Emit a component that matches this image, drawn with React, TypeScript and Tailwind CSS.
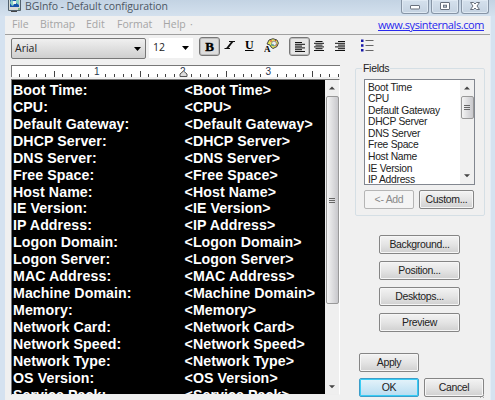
import React from "react";

const fields = [
  "Boot Time", "CPU", "Default Gateway", "DHCP Server", "DNS Server", "Free Space",
  "Host Name", "IE Version", "IP Address", "Logon Domain", "Logon Server", "MAC Address",
  "Machine Domain", "Memory", "Network Card", "Network Speed", "Network Type", "OS Version", "Service Pack",
];

function Button({ label, className = "" }: { label: string; className?: string }) {
  return (
    <button className={`flex items-center justify-center rounded-[2px] border border-[#858585] bg-linear-to-b from-[#f3f3f3] via-[#e4e4e4] to-[#d0d0d0] text-[10.5px] leading-none tracking-[-0.35px] whitespace-nowrap text-[#222] inset-shadow-[0_0_0_1px_#f6f6f6] ${className}`}>
      {label}
    </button>
  );
}

function Arrow({ up = false }: { up?: boolean }) {
  return (
    <svg width="6" height="4" viewBox="0 0 6 4" className="shrink-0" fill="#444">
      <path d={up ? "M3 0.5L6 3.5H0Z" : "M0 0.3H6L3 3.3Z"} />
    </svg>
  );
}

function WindowButton({ kind }: { kind: "min" | "max" | "close" }) {
  return (
    <div className="flex h-[14px] w-[28px] justify-center rounded-b-[3px] border border-t-0 border-[#8795a6] bg-linear-to-b from-[#d5e1ed] to-[#c4d2e1] inset-shadow-[0_0_0_1px_#dfe9f3]">
      <svg width="12" height="12" viewBox="0 0 12 12" fill="#fff" stroke="#69717d" strokeWidth="1">
        {kind === "min" && <rect x="1.5" y="5.5" width="9" height="3.5" rx="0.5" />}
        {kind === "max" && <><rect x="1.5" y="2.5" width="9" height="7" rx="0.5" /><rect x="4.5" y="5.2" width="3" height="2" fill="#c8d4e2" /></>}
        {kind === "close" && <path d="M1.5 2.5H4.5L6 4L7.5 2.5H10.5L8 6L10.5 9.5H7.5L6 8L4.5 9.5H1.5L4 6Z" />}
      </svg>
    </div>
  );
}

function Lines({ align }: { align: "left" | "center" | "right" }) {
  return (
    <svg width="12" height="12" viewBox="0 0 12 12" stroke="#111" strokeWidth="1">
      {[0, 1, 2, 3, 4, 5].map((i) => {
        const w = i % 2 ? 10 : 7;
        const x = align === "left" ? 1 : align === "right" ? 11 - w : 6 - w / 2;
        return <path key={i} d={`M${x} ${1.5 + i * 1.8}h${w}`} />;
      })}
    </svg>
  );
}

function Ruler() {
  const ticks = Array.from({ length: 38 }, (_, i) => i + 1);
  return (
    <svg width="328" height="12" viewBox="0 0 328 12" fontFamily="Liberation Sans, sans-serif" fontSize="10">
      {ticks.map((i) =>
        i % 10 === 0 ? null : (
          <path key={i} d={`M${Math.round(-1.3 + i * 8.6) + 0.5} ${i % 5 === 0 ? 5 : 8}V11`} stroke="#444" />
        ),
      )}
      <text x="82" y="9" fill="#29364f">1</text>
      <text x="168" y="8.5" fill="#29364f">2</text>
      <text x="253.5" y="9" fill="#29364f">3</text>
      <path d="M171.5 5L175 8V10.5H168V8Z" fill="#ddd" stroke="#555" />
    </svg>
  );
}

export default function App() {
  return (
    <div className="flex h-[400px] w-[495px] flex-col overflow-hidden bg-[#d5e2f0] font-['Liberation_Sans',sans-serif]">
      <header className="flex h-[16px] shrink-0 bg-linear-to-b from-[#c3d3e3] to-[#d4e1ee] pl-[8px]">
        <svg width="14" height="13" viewBox="0 0 14 13">
          <rect x="0" y="-1" width="13" height="12" fill="#d7d9d4" />
          <path d="M0.5 0V10.5H12.5V0" fill="none" stroke="#51606d" />
          <rect x="2" y="0" width="9" height="7" fill="#1553ab" />
          <path d="M3 0L6 1V5L4 6L2 3Z M8 0H11V5L8 3Z" fill="#86d0c3" />
          <path d="M5 1H8V4H5Z" fill="#edf4ec" />
          <path d="M3 11.5H9" stroke="#444" /><path d="M10 9H12" stroke="#369b45" />
        </svg>
        <h1 className="-mt-px ml-[3px] grow font-['Open_Sans',sans-serif] text-[10.5px] leading-[14px] tracking-[-0.12px] whitespace-nowrap text-[#4d5764]">BGInfo - Default configuration</h1>
        <div className="mr-[6px] flex w-[88px] shrink-0 justify-between">
          <WindowButton kind="min" /><WindowButton kind="max" /><WindowButton kind="close" />
        </div>
      </header>

      <div className="ml-[5px] flex w-[486px] grow flex-col border-r border-[#e3ecf5] bg-[#f0f0f0]">
        <nav className="flex h-[19px] shrink-0 border-b border-[#a0a0a0] pl-[7px] font-['Open_Sans',sans-serif] text-[10.5px] leading-[16px] text-[#a5a5a5] whitespace-nowrap">
          <span className="w-[28px]">File</span>
          <span className="w-[46px]">Bitmap</span>
          <span className="w-[31px]">Edit</span>
          <span className="w-[46px]">Format</span>
          <span className="w-[27px]">Help</span>
          <span className="grow">·</span>
          <a className="mr-[6px] text-[11px] leading-[18px] tracking-[-0.42px] text-[#2929ee] underline">www.sysinternals.com</a>
        </nav>

        <div className="flex h-[30px] shrink-0 pt-[3px] pl-[6px]">
          <div className="flex h-[21px] w-[135px] shrink-0 items-center justify-between rounded-[2px] border border-[#777] bg-linear-to-b from-[#f0f0f0] to-[#cfcfcf] pr-[4px] pl-[3px] font-['Open_Sans',sans-serif] text-[10.5px] text-[#222]">
            Arial <svg width="7" height="4" viewBox="0 0 7 4"><path d="M0 0H7L3.5 4Z" /></svg>
          </div>
          <div className="ml-[3px] flex h-[20px] w-[44px] shrink-0 items-center justify-between bg-white pr-[4px] pl-[4px] font-['Open_Sans',sans-serif] text-[10.5px] text-[#222]">
            12 <svg width="7" height="4" viewBox="0 0 7 4"><path d="M0 0H7L3.5 4Z" /></svg>
          </div>
          <div className="-mt-px ml-[6px] flex h-[19px] w-[21px] shrink-0 items-center justify-center rounded-[3px] border border-[#777] bg-[#ddd] inset-shadow-[0_0_0_1px_#bdbdbd]">
            <span className="mb-px font-['Liberation_Serif',serif] text-[13px] leading-none font-black [-webkit-text-stroke:0.4px_#000]">B</span>
          </div>
          <svg width="12" height="16" viewBox="0 0 12 16" className="ml-[4px]" stroke="#111">
            <path d="M5 3.5H11M0.5 10.5H6" /><path d="M8.5 3.5L3 10.5" strokeWidth="2" />
          </svg>
          <span className="ml-[9px] h-[14px] w-[12px] font-['Liberation_Serif',serif] text-[12px] leading-[14px] font-bold underline">U</span>
          <svg width="16" height="16" viewBox="0 0 16 16" className="ml-[7px]">
            <path d="M5 2L9 0.7L13 2L14.4 5L13 8.5L9 10.5L7 9L6 7L3 6Z" fill="#e9e65a" stroke="#444" />
            <circle cx="10" cy="5.5" r="2.4" fill="#eee" stroke="#777" strokeWidth="0.8" />
            <path d="M6 3h2M11 2.5h1M12 7h1" stroke="#d83632" />
            <path d="M7 7h3" stroke="#299890" />
            <text x="0" y="13.5" fontFamily="Liberation Serif, serif" fontSize="9" fontWeight="bold">A</text>
          </svg>
          <div className="-mt-px ml-[9px] flex h-[19px] w-[21px] shrink-0 items-center justify-center rounded-[3px] border border-[#777] bg-[#e7e7e7] inset-shadow-[0_0_0_1px_#bdbdbd]"><Lines align="left" /></div>
          <div className="mt-[2px] ml-[3px]"><Lines align="center" /></div>
          <div className="mt-[2px] ml-[9px]"><Lines align="right" /></div>
          <svg width="13" height="13" viewBox="0 0 13 13" className="mt-px ml-[15px]">
            <path d="M0 0.5h2.5v2.5H0zM0 5.2h2.5v2.5H0zM0 10h2.5v2.5H0z" fill="#1717a8" />
            <path d="M4.5 1.5h8M4.5 6.5h8M4.5 11.5h8" stroke="#666" />
          </svg>
        </div>

        <div className="flex min-h-0 grow pl-[6px]">
          <main className="flex w-[329px] shrink-0 flex-col">
            <div className="h-[12px] shrink-0 overflow-hidden border-t border-l border-[#777] bg-white"><Ruler /></div>
            <div className="mt-[2px] flex h-[316px] shrink-0 overflow-hidden border border-t-[#777] border-r-[#fff] border-b-[#eee] border-l-[#777]">
              <div className="w-[313px] overflow-hidden bg-black pt-[2px] pl-px text-[14.2px] leading-[16.93px] font-bold tracking-[0.08px] whitespace-nowrap text-white">
                {fields.map((field) => (
                  <div key={field} className="flex h-[16.93px]">
                    <span className="w-[171.5px] shrink-0">{field}:</span><span>&lt;{field}&gt;</span>
                  </div>
                ))}
              </div>
              <div className="flex grow flex-col items-center bg-[#efefef]">
                <div className="flex h-[16px] items-center"><Arrow up /></div>
                <div className="flex h-[208px] w-[13px] flex-col items-center justify-center gap-px rounded-[2px] border border-[#999] bg-linear-to-r from-[#f4f4f4] to-[#c8c8cc]">
                  <i className="h-px w-[6px] bg-[#666]" /><i className="h-px w-[6px] bg-[#666]" /><i className="h-px w-[6px] bg-[#666]" />
                </div>
                <div className="mt-auto flex h-[15px] items-center"><Arrow /></div>
              </div>
            </div>
          </main>

          <aside className="ml-[15px] flex w-[131px] flex-col">
            <fieldset className="-mt-[3px] flex h-[154px] w-[130px] shrink-0 flex-col rounded-[2px] border border-[#d5dfe5] pl-[8px]">
              <legend className="ml-[-2px] h-[12px] px-px text-[10.5px] leading-[12px] tracking-[-0.3px] text-[#222]">Fields</legend>
              <div className="mt-[5px] flex h-[106px] w-[111px] overflow-hidden border border-[#828790] bg-white">
                <ul className="w-[95px] shrink-0 overflow-hidden pt-[1.5px] pl-[3px] text-[10.3px] leading-[11.6px] tracking-[-0.28px] whitespace-nowrap text-[#222]">
                  {fields.slice(0, 9).map((field) => <li key={field} className="h-[11.6px]">{field}</li>)}
                </ul>
                <div className="flex grow flex-col items-center bg-[#f0f0f0]">
                  <div className="flex h-[16px] items-center"><Arrow up /></div>
                  <div className="flex h-[23px] w-[13px] flex-col items-center justify-center gap-px rounded-[2px] border border-[#999] bg-linear-to-r from-[#f4f4f4] to-[#c8c8cc]">
                    <i className="h-px w-[6px] bg-[#666]" /><i className="h-px w-[6px] bg-[#666]" /><i className="h-px w-[6px] bg-[#666]" />
                  </div>
                  <div className="mt-auto flex h-[17px] items-center"><Arrow /></div>
                </div>
              </div>
              <div className="mt-[5px] flex gap-[5px]">
                <div className="flex h-[19px] w-[50px] items-center justify-center rounded-[2px] border border-[#b5b5b5] bg-[#f4f4f4] text-[10.5px] tracking-[-0.3px] text-[#8a8a8a]">&lt;- Add</div>
                <Button label="Custom..." className="h-[19px] w-[55px]" />
              </div>
            </fieldset>
            <div className="mt-[19px] flex flex-col gap-[7px] pl-[24px]">
              {["Background...", "Position...", "Desktops...", "Preview"].map((label) => <Button key={label} label={label} className="h-[19px] w-[81px]" />)}
            </div>
            <Button label="Apply" className="mt-[21px] ml-[4px] h-[19px] w-[60px] shrink-0" />
            <div className="mt-[6px] ml-[4px] flex shrink-0 gap-[5px]">
              <button className="flex h-[19px] w-[60px] items-center justify-center rounded-[2px] border border-[#3c9dc9] bg-linear-to-b from-[#e5f3fa] to-[#b7ddf1] text-[10.5px] leading-none tracking-[-0.3px] text-[#222] inset-shadow-[0_0_0_1px_#38cdf5]">OK</button>
              <Button label="Cancel" className="h-[19px] w-[60px]" />
            </div>
            <svg width="7" height="7" viewBox="0 0 7 7" className="mt-[-3px] ml-auto shrink-0" fill="#aaa">
              <path d="M4 0h1v1H4zM1 3h1v1H1zM4 3h1v1H4zM1 6h1v1H1zM4 6h1v1H4z" />
            </svg>
          </aside>
        </div>
      </div>
    </div>
  );
}
